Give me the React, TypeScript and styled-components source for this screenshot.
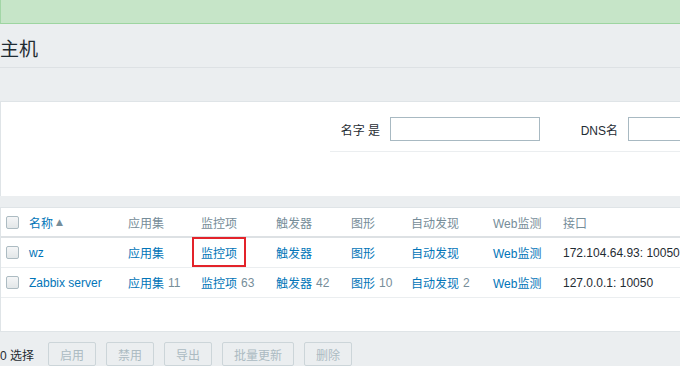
import React from "react";
import styled, { createGlobalStyle } from "styled-components";

const GlobalStyle = createGlobalStyle`
  html, body { margin: 0; padding: 0; }
  body {
    background: #ebeef0;
    font-family: "Liberation Sans", Arial, "Noto Sans CJK SC", sans-serif;
    font-size: 12px;
    color: #1f2c33;
  }
`;

const Page = styled.div`
  width: 680px;
  height: 366px;
  overflow: hidden;
  display: flex;
  flex-direction: column;
`;

const Banner = styled.div`
  height: 23px;
  flex: none;
  background: #c6e5c8;
  border-left: 1px solid #a2d6a6;
  border-bottom: 1px solid #9dd5a0;
`;

const Header = styled.div`
  height: 43px;
  flex: none;
  display: flex;
  align-items: center;
  border-bottom: 1px solid #dde1e4;
`;

const Title = styled.h1`
  margin: 0;
  font-size: 19px;
  font-weight: normal;
  color: #1f2c33;
  font-family: "Noto Sans CJK SC", sans-serif;
  line-height: 20px;
  padding-top: 4px;
`;

const FilterPanel = styled.div`
  margin-top: 33px;
  height: 94px;
  flex: none;
  background: #fff;
  border-left: 1px solid #dfe4e7;
  border-top: 1px solid #dfe4e7;
  display: flex;
  width: 900px;
`;

const FilterSpacer = styled.div`
  width: 329px;
  flex: none;
`;

const FilterColumn = styled.div`
  flex: 1;
  border-bottom: 1px solid #ebeef0;
  display: flex;
  align-items: flex-start;
  padding-top: 15px;
  box-sizing: border-box;
  height: 50px;
`;

const Field = styled.label<{ $labelWidth: number }>`
  display: flex;
  align-items: center;
  margin-right: 40px;
  span {
    box-sizing: border-box;
    width: ${(p) => p.$labelWidth}px;
    text-align: right;
    padding-right: 10px;
    color: #1f2c33;
  }
`;

const TextInput = styled.div`
  width: 148px;
  height: 22px;
  border: 1px solid #a8b9c2;
  background: #fff;
`;

const TableCard = styled.div`
  margin-top: 11px;
  height: 123px;
  flex: none;
  background: #fff;
  border-left: 1px solid #dfe4e7;
  border-top: 1px solid #dfe4e7;
  border-bottom: 1px solid #dfe4e7;
  width: 900px;
`;

const Row = styled.div<{ $head?: boolean }>`
  display: grid;
  grid-template-columns: 23px 99px 73px 75px 75px 60px 82px 70px 1fr;
  height: ${(p) => (p.$head ? 28 : 29)}px;
  align-items: center;
  border-bottom: ${(p) => (p.$head ? "2px solid #dde1e4" : "1px solid #ebeef0")};
  color: ${(p) => (p.$head ? "#768d99" : "#1f2c33")};
`;

const Cell = styled.div`
  padding-left: 5px;
  white-space: nowrap;
  display: flex;
  align-items: center;
`;

const Checkbox = styled.span`
  display: inline-block;
  width: 11px;
  height: 11px;
  border: 1px solid #acbbc2;
  border-radius: 2px;
  background: linear-gradient(#f5f6f7, #e2e6e8);
`;

const Link = styled.a`
  color: #0275b8;
  text-decoration: none;
`;

const Count = styled.span`
  color: #768d99;
  margin-left: 4px;
`;

const SortArrow = styled.span`
  color: #768d99;
  font-size: 9px;
  margin-left: 3px;
  font-family: "DejaVu Sans", sans-serif;
`;

const Marked = styled.span`
  position: relative;
  &::after {
    content: "";
    position: absolute;
    left: -9px;
    right: -9px;
    top: -7px;
    bottom: -6px;
    border: 2px solid #e3232a;
  }
`;

const Footer = styled.div`
  margin-top: 10px;
  display: flex;
  align-items: center;
  gap: 10px;
`;

const Selected = styled.span`
  color: #1f2c33;
  margin-right: 4px;
`;

const Button = styled.button<{ $w: number }>`
  width: ${(p) => p.$w}px;
  height: 24px;
  box-sizing: border-box;
  border: 1px solid #ccd5d9;
  border-radius: 2px;
  background: transparent;
  color: #acbbc2;
  font-family: "Liberation Sans", Arial, "Noto Sans CJK SC", sans-serif;
  font-size: 12px;
  padding: 0;
  flex: none;
`;

type HostRow = {
  name: string;
  apps?: number;
  items?: number;
  triggers?: number;
  graphs?: number;
  discovery?: number;
  iface: string;
  mark?: boolean;
};

const rows: HostRow[] = [
  { name: "wz", iface: "172.104.64.93: 10050", mark: true },
  { name: "Zabbix server", apps: 11, items: 63, triggers: 42, graphs: 10, discovery: 2, iface: "127.0.0.1: 10050" },
];

const LinkCell = ({ label, count, mark }: { label: string; count?: number; mark?: boolean }) => (
  <Cell>
    {mark ? (
      <Marked>
        <Link>{label}</Link>
      </Marked>
    ) : (
      <Link>{label}</Link>
    )}
    {count !== undefined && <Count>{count}</Count>}
  </Cell>
);

export default function App() {
  return (
    <Page>
      <GlobalStyle />
      <Banner />
      <Header>
        <Title>主机</Title>
      </Header>
      <FilterPanel>
        <FilterSpacer />
        <FilterColumn>
          <Field $labelWidth={60}>
            <span>名字 是</span>
            <TextInput />
          </Field>
          <Field $labelWidth={48}>
            <span>DNS名</span>
            <TextInput />
          </Field>
        </FilterColumn>
      </FilterPanel>
      <TableCard>
        <Row $head>
          <Cell>
            <Checkbox />
          </Cell>
          <Cell>
            <Link>名称</Link>
            <SortArrow>▲</SortArrow>
          </Cell>
          <Cell>应用集</Cell>
          <Cell>监控项</Cell>
          <Cell>触发器</Cell>
          <Cell>图形</Cell>
          <Cell>自动发现</Cell>
          <Cell>Web监测</Cell>
          <Cell>接口</Cell>
        </Row>
        {rows.map((r) => (
          <Row key={r.name}>
            <Cell>
              <Checkbox />
            </Cell>
            <LinkCell label={r.name} />
            <LinkCell label="应用集" count={r.apps} />
            <LinkCell label="监控项" count={r.items} mark={r.mark} />
            <LinkCell label="触发器" count={r.triggers} />
            <LinkCell label="图形" count={r.graphs} />
            <LinkCell label="自动发现" count={r.discovery} />
            <LinkCell label="Web监测" />
            <Cell>{r.iface}</Cell>
          </Row>
        ))}
      </TableCard>
      <Footer>
        <Selected>0 选择</Selected>
        <Button $w={48}>启用</Button>
        <Button $w={48}>禁用</Button>
        <Button $w={48}>导出</Button>
        <Button $w={72}>批量更新</Button>
        <Button $w={48}>删除</Button>
      </Footer>
    </Page>
  );
}
